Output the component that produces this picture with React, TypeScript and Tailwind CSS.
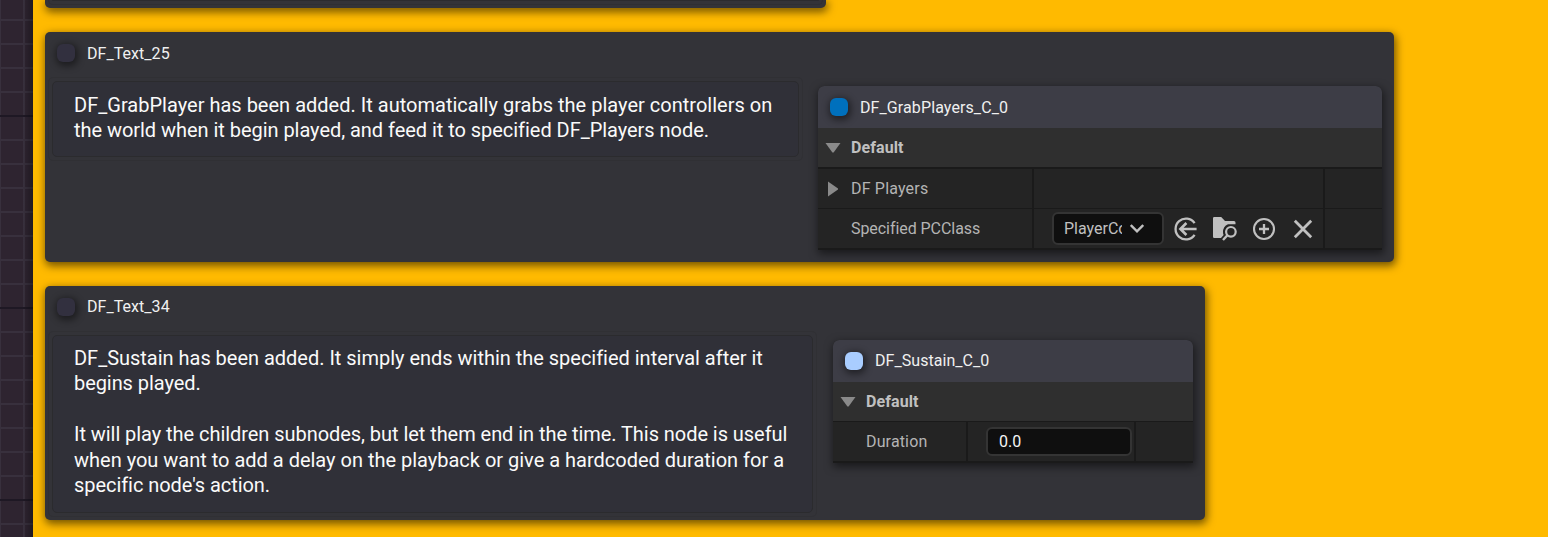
import type { ReactNode } from "react";

function Dot({ color }: { color: string }) {
  return <div className={`size-[18px] shrink-0 rounded-[6px] shadow-[1px_2px_7px_2px_rgba(0,0,0,0.45)] ${color}`} />;
}

function NodeTitle({ color, text, children }: { color: string; text: string; children: ReactNode }) {
  return (
    <div className="flex h-[42px] items-center gap-3 pl-3">
      <Dot color={color} />
      <span className={`text-[16px] leading-[20px] whitespace-nowrap text-[#f0f0f0] ${text}`}>{children}</span>
    </div>
  );
}

function TextNode({ title, text, box, children }: { title: string; text: string; box: string; children: ReactNode }) {
  return (
    <section
      className={`flex flex-col rounded-[5px] bg-[#333338] shadow-[1px_3px_8px_1px_rgba(0,0,0,0.55)] ${box}`}
    >
      <NodeTitle color="bg-[#32303f]" text={text}>{title}</NodeTitle>
      <div className="flex items-start">{children}</div>
    </section>
  );
}

type Line = { text: string; tracking: string };

function NoteBox({ size, pad, lines }: { size: string; pad: string; lines: Line[] }) {
  return (
    <div className={`mt-[3px] ml-[3px] shrink-0 rounded-[5px] border border-[#303034] p-[3px] ${size}`}>
      <div className={`h-full rounded-[5px] border border-[#2b2b2e] bg-[#303038] pl-[21px] ${pad}`}>
        {lines.map((line, i) => (
          <p key={i} className={`h-[25.4px] text-[20px] leading-[25.4px] whitespace-pre text-[#fafafa] ${line.tracking}`}>
            {line.text}
          </p>
        ))}
      </div>
    </div>
  );
}

function DetailNode({ title, text, color, box, children }: { title: string; text: string; color: string; box: string; children: ReactNode }) {
  return (
    <div className={`flex flex-col rounded-t-[6px] bg-[#1a1a1a] shadow-[1px_3px_8px_1px_rgba(0,0,0,0.5)] ${box}`}>
      <div className="rounded-t-[6px] bg-[#3d3d46]">
        <NodeTitle color={color} text={text}>{title}</NodeTitle>
      </div>
      <div className="flex h-[39px] items-center bg-[#2f2f2f] pl-[7px]">
        <svg width="16" height="10" viewBox="0 0 16 10" className="shrink-0">
          <path d="M0.5 0h15L8.6 9.4h-1.2z" fill="#8a8a8a" />
        </svg>
        <span className="ml-[10px] text-[16px] font-bold tracking-[0.08px] text-[#c0c0c0]">Default</span>
      </div>
      {children}
    </div>
  );
}

function UseIcon() {
  return (
    <svg width="24" height="24" viewBox="0 0 24 24" fill="none" stroke="#c0c0c0" strokeWidth="2.3">
      <path d="M20.6 6.2A10.4 10.4 0 1 0 20.6 17.800" />
      <path d="M22.600 12H7M12.400 6 6.400 12l6 6" strokeWidth="2.600" />
    </svg>
  );
}

function BrowseIcon() {
  return (
    <svg width="26" height="26" viewBox="0 0 26 26" fill="none">
      <path
        d="M1 2.200Q1 1 2.200 1H9.200L13 5H22Q23.500 5 23.500 6.500V8.200H16Q11 10.500 11 16Q11 17.800 11.600 19L9 22H2.200Q1 22 1 20.800Z"
        fill="#c0c0c0"
      />
      <circle cx="18.900" cy="15.800" r="4.800" stroke="#c0c0c0" strokeWidth="2.200" />
      <path d="M15.400 19.300 11 24" stroke="#c0c0c0" strokeWidth="2.400" />
    </svg>
  );
}

function AddIcon() {
  return (
    <svg width="24" height="24" viewBox="0 0 24 24" fill="none" stroke="#c0c0c0" strokeWidth="2.100">
      <circle cx="12" cy="12" r="10" />
      <path d="M12 7v10M7 12h10" strokeWidth="2.300" />
    </svg>
  );
}

function ClearIcon() {
  return (
    <svg width="20" height="20" viewBox="0 0 20 20" fill="none" stroke="#c0c0c0" strokeWidth="2.800">
      <path d="M1.800 1.800 18.200 18.200M18.200 1.800 1.800 18.200" />
    </svg>
  );
}

export default function App() {
  return (
    <main className="flex h-[537px] w-full overflow-hidden bg-[#ffba00] font-['Roboto',sans-serif]">
      <div className="relative h-full w-[33px] shrink-0 bg-[#2e2430]">
        <svg width="33" height="537" className="block">
          <path d="M0 0V537M24 0V537" stroke="#38303d" strokeWidth="2" />
          {Array.from({ length: 22 }, (_, i) => {
            const dark = i % 8 === 4;
            return <rect key={i} x="0" y={19 + i * 24} width="33" height="2" fill={dark ? "#1e1824" : "#38303d"} />;
          })}
        </svg>
        <div className="absolute inset-y-0 right-0 w-[10px] bg-gradient-to-r from-transparent to-black/30" />
      </div>

      <div className="flex min-w-0 flex-1 flex-col pl-3">
        <div className="h-2 w-[781px] shrink-0 rounded-b-[5px] bg-[#333338] px-[3px] pb-[3px] shadow-[1px_3px_8px_1px_rgba(0,0,0,0.55)]">
          <div className="h-[5px] rounded-b-[5px] border border-t-0 border-[#2f2f33] px-[3px] pb-[3px]">
            <div className="h-[1px] rounded-b-[3px] bg-[#2b2b2e]" />
          </div>
        </div>

        <div className="mt-6 flex shrink-0 flex-col gap-6">
          <TextNode title="DF_Text_25" text="pt-[2px] tracking-[0.05px]" box="w-[1349px] h-[230px]">
            <NoteBox
              size="w-[755px] h-[84px]"
              pad="pt-[11px]"
              lines={[
                { text: "DF_GrabPlayer has been added. It automatically grabs the player controllers on", tracking: "tracking-[0.013px]" },
                { text: "the world when it begin played, and feed it to specified DF_Players node.", tracking: "tracking-[-0.041px]" },
              ]}
            />
            <DetailNode
              title="DF_GrabPlayers_C_0"
              text="pt-[2px] tracking-[0.1px]"
              color="bg-[#0070bd]"
              box="mt-3 ml-[15px] w-[564px] h-[164px]"
            >
              <div className="mt-[2px] flex h-[39px] gap-[2px]">
                <div className="flex w-[214px] items-center bg-[#242424] pl-[10px]">
                  <svg width="11" height="16" viewBox="0 0 11 16" className="shrink-0">
                    <path d="M0 0.500 10 7.500v1L0 15.500z" fill="#8a8a8a" />
                  </svg>
                  <span className="ml-3 text-[16px] tracking-[0.18px] text-[#b4b4b4]">DF Players</span>
                </div>
                <div className="w-[289px] bg-[#242424]" />
                <div className="flex-1 bg-[#242424]" />
              </div>
              <div className="mt-px flex h-[39px] gap-[2px]">
                <div className="flex w-[214px] items-center bg-[#242424] pl-[33px]">
                  <span className="text-[16px] tracking-[-0.06px] text-[#b4b4b4]">Specified PCClass</span>
                </div>
                <div className="flex w-[289px] items-center bg-[#242424] pl-[18px]">
                  <div className="flex h-[33px] w-[112px] shrink-0 items-center rounded-[6px] border-2 border-[#343434] bg-[#0f0f0f] pl-[10px]">
                    <span className="w-[58px] overflow-hidden text-[16px] whitespace-nowrap text-[#c0c0c0]">PlayerController</span>
                    <svg width="14" height="9" viewBox="0 0 14 9" className="ml-2 shrink-0" fill="none" stroke="#c0c0c0" strokeWidth="2.400">
                      <path d="M0.800 1 7 7.300 13.200 1" />
                    </svg>
                  </div>
                  <div className="ml-[10px] flex shrink-0 items-center">
                    <UseIcon />
                    <span className="ml-[14px]"><BrowseIcon /></span>
                    <span className="ml-[14px]"><AddIcon /></span>
                    <span className="ml-[17px]"><ClearIcon /></span>
                  </div>
                </div>
                <div className="flex-1 bg-[#242424]" />
              </div>
            </DetailNode>
          </TextNode>

          <TextNode title="DF_Text_34" text="tracking-[0.05px]" box="w-[1160px] h-[234px]">
            <NoteBox
              size="w-[769px] h-[186px]"
              pad="pt-[10px]"
              lines={[
                { text: "DF_Sustain has been added. It simply ends within the specified interval after it", tracking: "tracking-[-0.018px]" },
                { text: "begins played.", tracking: "tracking-[-0.07px]" },
                { text: "", tracking: "" },
                { text: "It will play the children subnodes, but let them end in the time. This node is useful", tracking: "tracking-[-0.052px]" },
                { text: "when you want to add a delay on the playback or give a hardcoded duration for a", tracking: "tracking-[-0.006px]" },
                { text: "specific node's action.", tracking: "tracking-[-0.06px]" },
              ]}
            />
            <DetailNode title="DF_Sustain_C_0" text="tracking-[0.05px]" color="bg-[#a9cdff]" box="mt-3 ml-4 w-[360px] h-[123px]">
              <div className="mt-px flex h-[39px] gap-[2px]">
                <div className="flex w-[133px] items-center bg-[#242424] pl-[33px]">
                  <span className="text-[16px] tracking-[0.15px] text-[#b4b4b4]">Duration</span>
                </div>
                <div className="flex w-[166px] items-center bg-[#242424] pl-[18px]">
                  <div className="flex h-[29px] w-[146px] items-center rounded-[6px] border-2 border-[#343434] bg-[#0f0f0f] pl-[11px]">
                    <span className="text-[16px] text-[#f5f5f5]">0.0</span>
                  </div>
                </div>
                <div className="flex-1 bg-[#242424]" />
              </div>
            </DetailNode>
          </TextNode>
        </div>
      </div>
    </main>
  );
}
